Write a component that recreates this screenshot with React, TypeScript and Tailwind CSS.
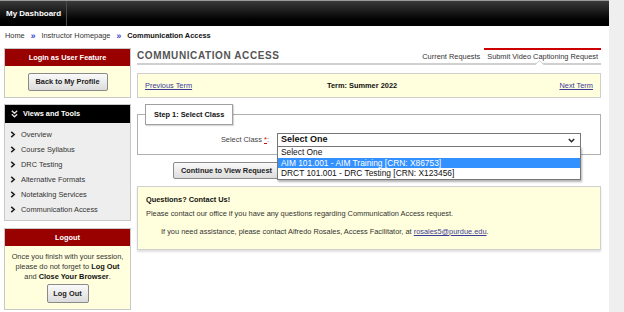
import React from "react";

function Chev() {
  return (
    <svg width="6" height="7" viewBox="0 0 6 7" className="shrink-0">
      <path d="M1.2 0.8 L4.2 3.5 L1.2 6.2" fill="none" stroke="#222" strokeWidth="1.6" />
    </svg>
  );
}

function DoubleChevDown() {
  return (
    <svg width="7" height="8" viewBox="0 0 7 8" className="shrink-0">
      <path d="M0.8 0.8 L3.5 3.3 L6.2 0.8 M0.8 4.3 L3.5 6.8 L6.2 4.3" fill="none" stroke="#ddd" strokeWidth="1.4" />
    </svg>
  );
}

export default function App() {
  const items = [
    "Overview",
    "Course Syllabus",
    "DRC Testing",
    "Alternative Formats",
    "Notetaking Services",
    "Communication Access",
  ];
  return (
    <div className="flex w-[624px] h-[312px] overflow-hidden bg-white text-[#333] font-['Liberation_Sans',Arial,sans-serif] text-[7.4px]">
      <div className="w-[609px] flex flex-col">
        {/* top bar */}
        <div className="h-[26px] border-t border-[#9a9a9a] bg-gradient-to-b from-[#3a3a3a] via-[#151515] to-[#000] flex">
          <div className="w-[67px] h-full border-r border-[#4a4a4a] flex items-center pl-[6px] text-white font-bold text-[8px]">
            My Dashboard
          </div>
        </div>
        {/* breadcrumb */}
        <div className="h-[20px] flex items-center pl-[5px] text-[#333]">
          <span>Home</span>
          <span className="mx-[6px] text-[#3a3ad0] font-bold text-[8.5px]">»</span>
          <span>Instructor Homepage</span>
          <span className="mx-[6px] text-[#3a3ad0] font-bold text-[8.5px]">»</span>
          <span className="font-bold text-[#111]">Communication Access</span>
        </div>
        <div className="flex pl-[4px] gap-[6px] mt-[2px]">
          {/* left column */}
          <div className="w-[127px] flex flex-col">
            <div className="border border-[#c8c8c8]">
              <div className="h-[17px] bg-[#990000] text-white font-bold flex items-center justify-center">
                Login as User Feature
              </div>
              <div className="h-[31px] bg-[#ffffdd] flex items-center justify-center">
                <div className="w-[80px] h-[18px] border border-[#8a8a8a] rounded-[2px] bg-gradient-to-b from-[#fafafa] to-[#dcdcdc] font-bold text-[#222] flex items-center justify-center">
                  Back to My Profile
                </div>
              </div>
            </div>
            <div className="mt-[6px] border border-[#c8c8c8]">
              <div className="h-[18px] bg-black text-white font-bold flex items-center pl-[6px] gap-[5px]">
                <DoubleChevDown />
                <span>Views and Tools</span>
              </div>
              <div className="bg-[#eeeeee] pt-[4px] pb-[3px]">
                {items.map((t) => (
                  <div key={t} className="h-[15px] flex items-center pl-[5px] gap-[5px] text-[#333]">
                    <Chev />
                    <span>{t}</span>
                  </div>
                ))}
              </div>
            </div>
            <div className="mt-[7px] border border-[#c8c8c8]">
              <div className="h-[17px] bg-[#990000] text-white font-bold flex items-center justify-center">
                Logout
              </div>
              <div className="h-[63px] bg-[#ffffdd] flex flex-col items-center pt-[6px] text-center leading-[10px] text-[#333]">
                <div>Once you finish with your session,</div>
                <div>
                  please do not forget to <b className="text-[#111]">Log Out</b>
                </div>
                <div>
                  and <b className="text-[#111]">Close Your Browser</b>.
                </div>
                <div className="mt-[2px] w-[42px] h-[19px] border border-[#8a8a8a] rounded-[2px] bg-gradient-to-b from-[#fafafa] to-[#dcdcdc] font-bold text-[#222] flex items-center justify-center">
                  Log Out
                </div>
              </div>
            </div>
          </div>
          {/* main column */}
          <div className="w-[464px] flex flex-col">
            <div className="h-[17px] flex justify-between items-stretch border-b-2 border-[#d0d0d0] relative">
              <div className="flex items-center font-bold text-[10px] tracking-[0.6px] text-[#555]">
                COMMUNICATION ACCESS
              </div>
              <div className="flex items-stretch">
                <div className="flex items-center px-[4px] text-[#333] border-t-2 border-transparent">Current Requests</div>
                <div className="flex items-center pl-[3px] pr-[3px] text-[#333] border-t-2 border-[#cc0000] relative">
                  Submit Video Captioning Request
                  <svg width="9" height="5" viewBox="0 0 9 5" className="absolute left-[51px] bottom-[-2px]">
                    <path d="M0 5 L4.5 0.8 L9 5 Z" fill="#fff" />
                    <path d="M0 4.6 L4.5 0.8 L9 4.6" fill="none" stroke="#d0d0d0" strokeWidth="1" />
                  </svg>
                </div>
              </div>
            </div>
            {/* term bar */}
            <div className="mt-[8px] h-[25px] border border-[#cfcfcf] bg-[#ffffdd] grid grid-cols-[182px_1fr_auto] items-center px-[7px]">
              <span className="text-[#3a3a9a] underline">Previous Term</span>
              <span className="font-bold text-[#111]">Term: Summer 2022</span>
              <span className="text-[#3a3a9a] underline">Next Term</span>
            </div>
            {/* fieldset */}
            <fieldset className="mt-[6px] border border-[#b0b0b0] pb-[7px]">
              <legend className="ml-[7px] h-[21px] px-[8px] border border-[#a0a0a0] bg-white shadow-[1px_1px_1px_rgba(0,0,0,0.15)] font-bold text-[#111] flex items-center">
                Step 1: Select Class
              </legend>
              <div className="flex items-center mt-[8px]">
                <div className="w-[131px] text-right text-[#444]">
                  Select Class <span className="text-[#cc0000] underline">*</span>:
                </div>
                <div className="ml-[8px] relative w-[304px] h-[14px] border border-[#777] bg-white flex items-center pl-[3px] justify-between pr-[5px]">
                  <span className="text-[9px] font-bold text-[#111]">Select One</span>
                  <svg width="7" height="5" viewBox="0 0 7 5">
                    <path d="M0.8 1 L3.5 3.8 L6.2 1" fill="none" stroke="#222" strokeWidth="1.4" />
                  </svg>
                  <div className="absolute z-10 left-[-1px] top-[12px] w-[304px] border border-[#777] bg-white shadow-[1px_2px_2px_rgba(0,0,0,0.3)] text-[8.4px] text-[#111]">
                    <div className="h-[10.5px] leading-[10.5px] pl-[3px]">Select One</div>
                    <div className="h-[10.5px] leading-[10.5px] pl-[3px] bg-[#3391ff] text-white">AIM 101.001 - AIM Training [CRN: X86753]</div>
                    <div className="h-[10.5px] leading-[10.5px] pl-[3px]">DRCT 101.001 - DRC Testing [CRN: X123456]</div>
                  </div>
                </div>
              </div>
            </fieldset>
            <div className="mt-[7px] ml-[36px] w-[130px] h-[17px] border border-[#8a8a8a] rounded-[2px] bg-gradient-to-b from-[#fafafa] to-[#dcdcdc] font-bold text-[#222] flex items-center pl-[7px]">
              Continue to View Request
            </div>
            {/* questions */}
            <div className="mt-[7px] h-[64px] border border-[#d0d0d0] bg-[#ffffdd] shadow-[0_2px_2px_rgba(0,0,0,0.12)] pl-[8px] pt-[8px]">
              <div className="font-bold text-[#111] leading-[10px]">Questions? Contact Us!</div>
              <div className="mt-[4px] leading-[10px]">
                Please contact our office if you have any questions regarding Communication Access request.
              </div>
              <div className="mt-[8px] leading-[10px] pl-[15px]">
                If you need assistance, please contact Alfredo Rosales, Access Facilitator, at{" "}
                <span className="text-[#3a3a9a] underline">rosales5@purdue.edu</span>.
              </div>
            </div>
          </div>
        </div>
      </div>
      <div className="w-[15px] h-full bg-[#efefef]" />
    </div>
  );
}
